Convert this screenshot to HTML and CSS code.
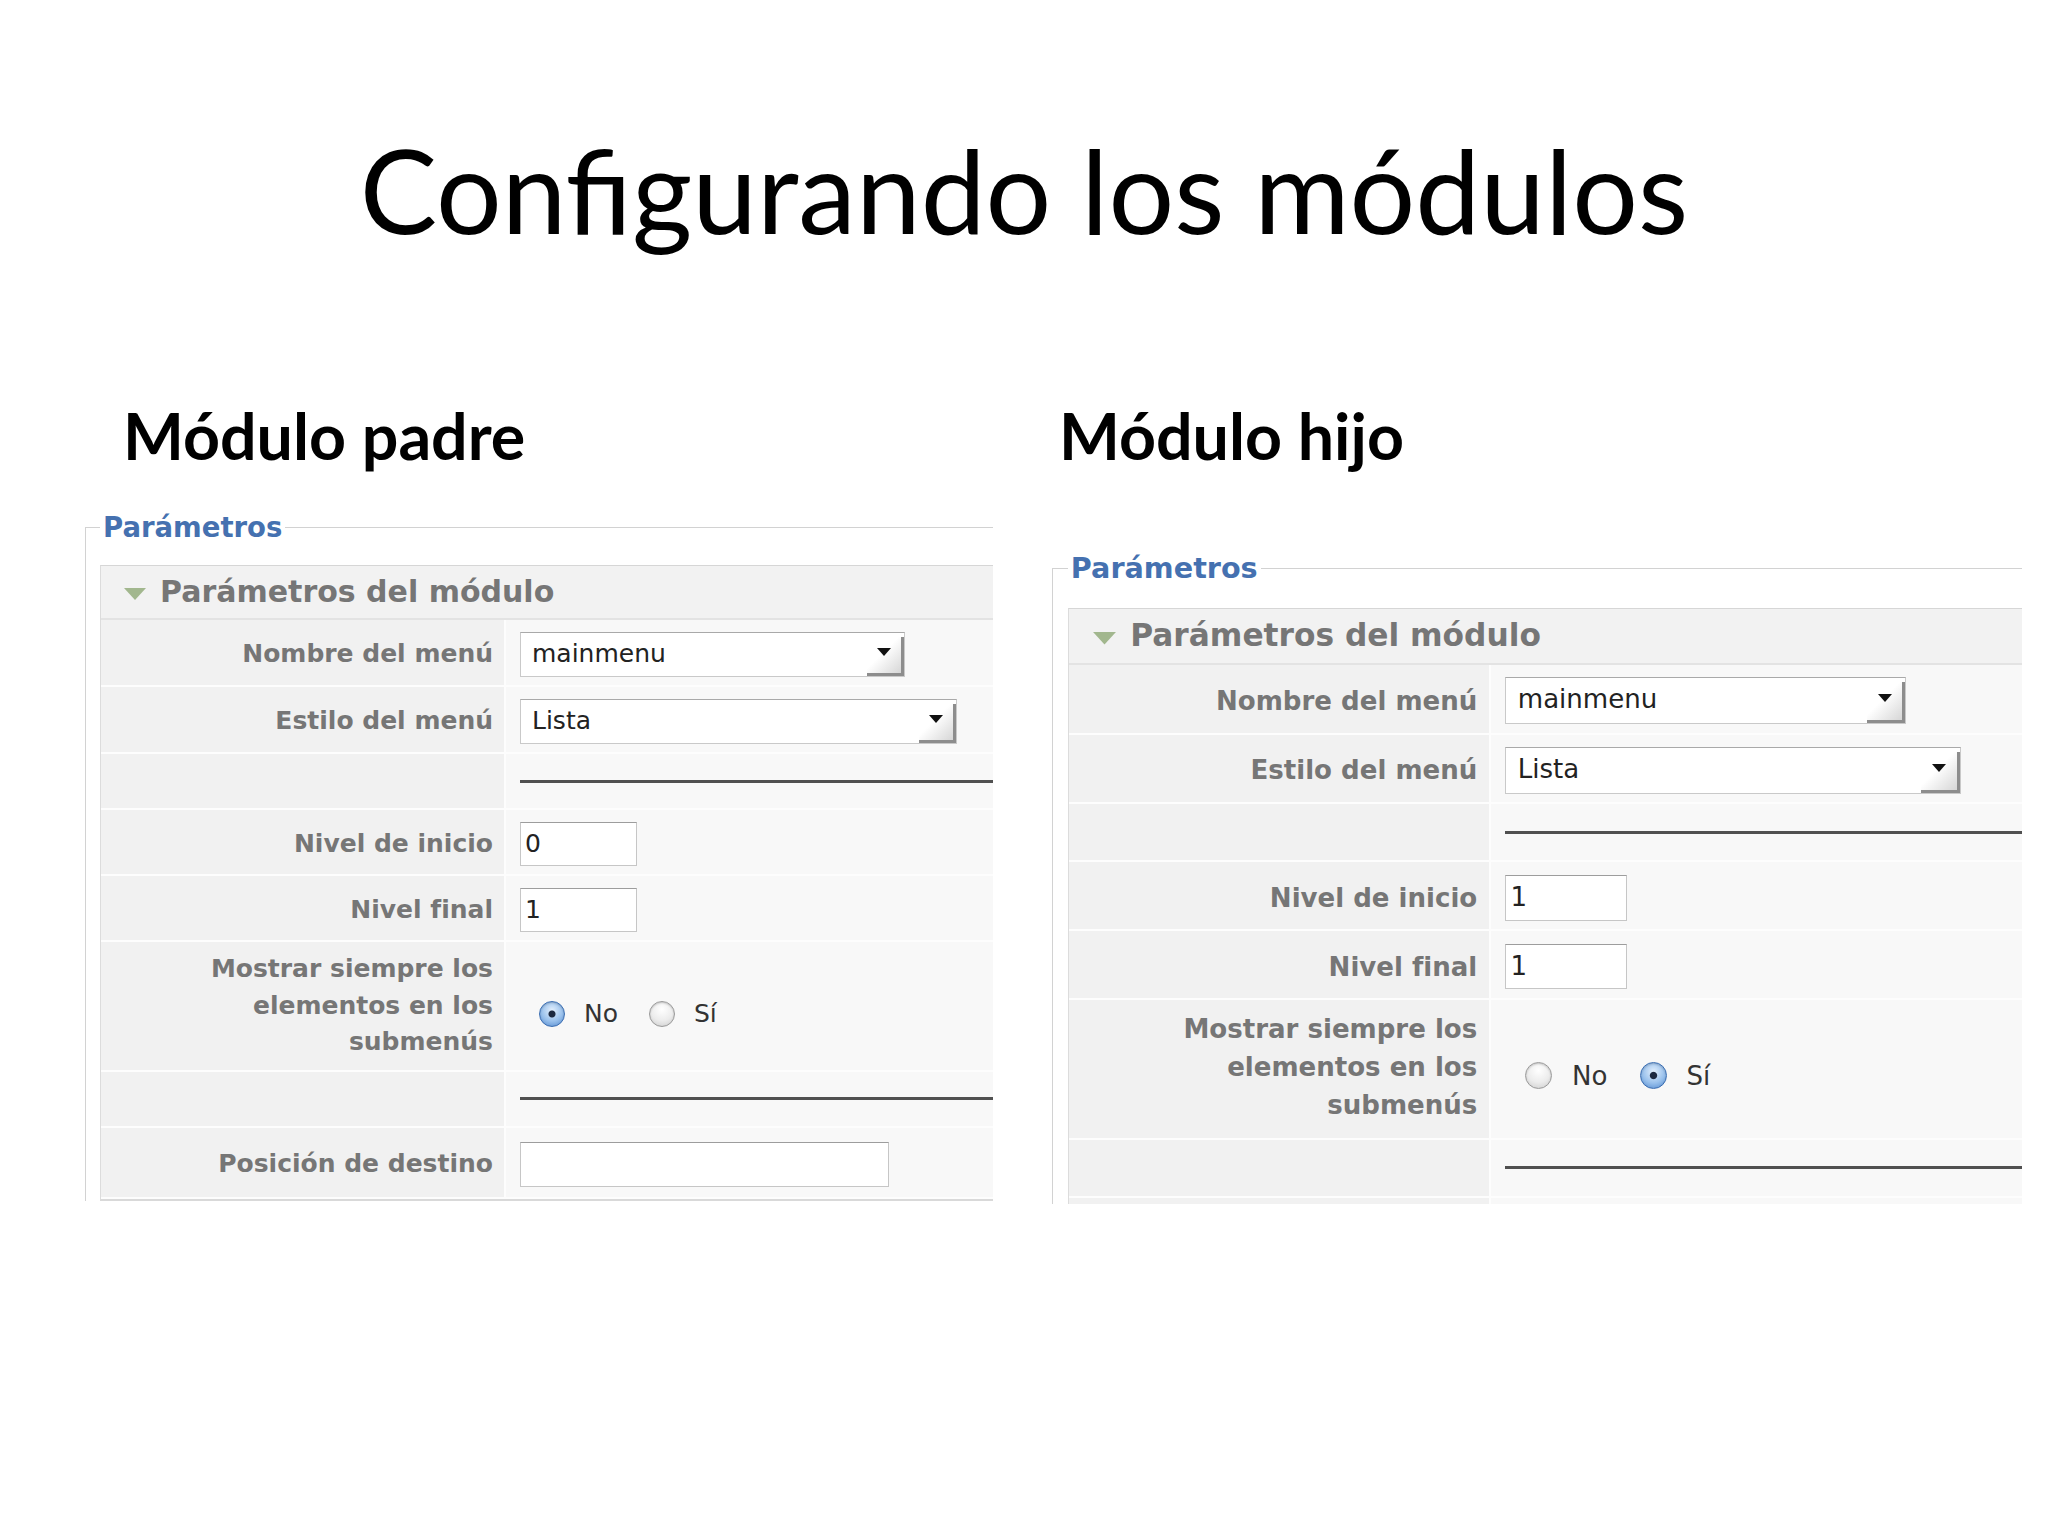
FILE: index.html
```html
<!DOCTYPE html>
<html lang="es">
<head>
    <meta charset="UTF-8">
    <meta name="viewport" content="width=device-width, initial-scale=1.0">
    <title>Configurando los módulos</title>
    <link rel="stylesheet" href="styles.css">
</head>
<body>
    <main class="slide">
        <h1 class="slide-title">Configurando los módulos</h1>

        <div class="columns">
            <!-- Parent menu module -->
            <section class="column column-parent">
                <h2>Módulo padre</h2>
                <div class="shot">
                    <fieldset class="params">
                        <legend>Parámetros</legend>
                        <div class="panel">
                            <div class="panel-head">
                                <svg class="toggle" width="24" height="14" viewBox="0 0 24 14"><polygon points="1,1 23,1 12,13" fill="#a2b78e"/></svg>
                                Parámetros del módulo
                            </div>
                            <div class="row">
                                <div class="key"><label>Nombre del menú</label></div>
                                <div class="value">
                                    <div class="select select-name"><span>mainmenu</span><i class="select-btn"></i></div>
                                </div>
                            </div>
                            <div class="row">
                                <div class="key"><label>Estilo del menú</label></div>
                                <div class="value">
                                    <div class="select select-style"><span>Lista</span><i class="select-btn"></i></div>
                                </div>
                            </div>
                            <div class="row row-spacer">
                                <div class="key"></div>
                                <div class="value"><hr class="spacer"></div>
                            </div>
                            <div class="row">
                                <div class="key"><label>Nivel de inicio</label></div>
                                <div class="value"><div class="field field-short">0</div></div>
                            </div>
                            <div class="row">
                                <div class="key"><label>Nivel final</label></div>
                                <div class="value"><div class="field field-short">1</div></div>
                            </div>
                            <div class="row row-tall">
                                <div class="key"><label>Mostrar siempre los elementos en los submenús</label></div>
                                <div class="value">
                                    <div class="radios">
                                        <span class="radio checked"></span><span class="radio-label">No</span>
                                        <span class="radio"></span><span class="radio-label">Sí</span>
                                    </div>
                                </div>
                            </div>
                            <div class="row row-spacer">
                                <div class="key"></div>
                                <div class="value"><hr class="spacer"></div>
                            </div>
                            <div class="row row-last">
                                <div class="key"><label>Posición de destino</label></div>
                                <div class="value"><div class="field field-long"></div></div>
                            </div>
                        </div>
                    </fieldset>
                </div>
            </section>

            <!-- Child menu module -->
            <section class="column column-child">
                <h2>Módulo hijo</h2>
                <div class="shot">
                    <fieldset class="params">
                        <legend>Parámetros</legend>
                        <div class="panel">
                            <div class="panel-head">
                                <svg class="toggle" width="24" height="14" viewBox="0 0 24 14"><polygon points="1,1 23,1 12,13" fill="#a2b78e"/></svg>
                                Parámetros del módulo
                            </div>
                            <div class="row">
                                <div class="key"><label>Nombre del menú</label></div>
                                <div class="value">
                                    <div class="select select-name"><span>mainmenu</span><i class="select-btn"></i></div>
                                </div>
                            </div>
                            <div class="row">
                                <div class="key"><label>Estilo del menú</label></div>
                                <div class="value">
                                    <div class="select select-style"><span>Lista</span><i class="select-btn"></i></div>
                                </div>
                            </div>
                            <div class="row row-spacer">
                                <div class="key"></div>
                                <div class="value"><hr class="spacer"></div>
                            </div>
                            <div class="row">
                                <div class="key"><label>Nivel de inicio</label></div>
                                <div class="value"><div class="field field-short">1</div></div>
                            </div>
                            <div class="row">
                                <div class="key"><label>Nivel final</label></div>
                                <div class="value"><div class="field field-short">1</div></div>
                            </div>
                            <div class="row row-tall">
                                <div class="key"><label>Mostrar siempre los elementos en los submenús</label></div>
                                <div class="value">
                                    <div class="radios">
                                        <span class="radio"></span><span class="radio-label">No</span>
                                        <span class="radio checked"></span><span class="radio-label">Sí</span>
                                    </div>
                                </div>
                            </div>
                            <div class="row row-spacer">
                                <div class="key"></div>
                                <div class="value"><hr class="spacer"></div>
                            </div>
                            <div class="row row-spacer">
                                <div class="key"></div>
                                <div class="value"></div>
                            </div>
                        </div>
                    </fieldset>
                </div>
            </section>
        </div>
    </main>
</body>
</html>
```

FILE: styles.css
```css
body {
    margin: 0;
    background: #fff;
}
.slide {
    width: 2048px;
    height: 1536px;
    overflow: hidden;
    font-family: Lato, "Open Sans", sans-serif;
    color: #000;
}
.slide-title {
    margin: 0;
    padding-top: 132px;
    font-size: 116px;
    font-weight: 400;
    line-height: 1;
    text-align: center;
}
.columns {
    display: grid;
    grid-template-columns: 967px 1fr;
    padding-left: 81px;
    margin-top: 155px;
}
.column h2 {
    margin: 0;
    font-size: 64.5px;
    font-weight: 700;
    line-height: 1;
}
.column-parent h2 {
    padding-left: 42px;
}
.column-child h2 {
    padding-left: 11px;
}

/* admin screenshot: parameters fieldset */
.shot {
    box-sizing: border-box;
    overflow: hidden;
    padding-top: 8px;
    background: #fff;
    font-family: "DejaVu Sans", Verdana, sans-serif;
}
.column-parent .shot {
    width: 912px;
    height: 705px;
    margin-top: 35.5px;
}
.column-child .shot {
    zoom: 1.042;
    width: 935px;
    height: 634px;
    margin-top: 72.5px;
}
.params {
    width: 1000px;
    min-width: 0;
    margin: 0 0 0 4px;
    padding: 0 0 0 14px;
    border: 1px solid #d2d2d2;
    border-right: 0;
    border-bottom: 0;
}
.params legend {
    padding: 0 3px;
    font-size: 27.5px;
    font-weight: 700;
    line-height: 33px;
    color: #4571b0;
}
.panel {
    margin-top: 21px;
    border-top: 1px solid #d6d6d6;
    border-left: 1px solid #dcdcdc;
    border-bottom: 2px solid #d9d9d9;
    background: #f8f8f8;
}
.panel-head {
    display: flex;
    align-items: center;
    gap: 13px;
    padding: 8px 0 8px 22px;
    border-bottom: 2px solid #e3e3e3;
    background: #f2f2f2;
    font-size: 30px;
    font-weight: 700;
    line-height: 36px;
    color: #767676;
}
.toggle {
    flex: none;
    margin-top: 4px;
}

.row {
    display: grid;
    grid-template-columns: 405px 1fr;
}
.key,
.value {
    display: flex;
    align-items: center;
    padding: 12px 0 8px;
    border-bottom: 2px solid #fdfdfd;
}
.key {
    justify-content: flex-end;
    padding-left: 30px;
    padding-right: 11px;
    border-right: 2px solid #fdfdfd;
    background: #f1f1f1;
    font-size: 25px;
    font-weight: 700;
    line-height: 36.5px;
    color: #767676;
    text-align: right;
}
.value {
    padding-left: 14px;
    font-size: 25px;
    color: #222;
}
.row-tall .key,
.row-tall .value {
    padding-top: 9px;
    padding-bottom: 9px;
}
.column-child .row-tall .key,
.column-child .row-tall .value {
    padding-top: 10px;
    padding-bottom: 13px;
}
.row-spacer .key,
.row-spacer .value {
    height: 54px;
    padding-top: 0;
    padding-bottom: 0;
}
.row-last .key,
.row-last .value {
    padding-top: 14px;
    padding-bottom: 10px;
}
.spacer {
    width: 100%;
    margin: 0;
    border: 0;
    border-top: 3px solid #505050;
}

/* form controls */
.select {
    display: flex;
    box-sizing: border-box;
    height: 45px;
    border: 1px solid #c9c9c9;
    border-top-color: #a9a9a9;
    background: #fff;
}
.select span {
    flex: 1;
    padding-left: 11px;
    line-height: 42px;
}
.select-name {
    width: 385px;
}
.select-style {
    width: 437px;
}
.select-btn {
    display: flex;
    justify-content: center;
    align-items: center;
    width: 34px;
    margin-top: 4px;
    border-right: 3px solid #8d8d8d;
    border-bottom: 3px solid #8d8d8d;
    background: linear-gradient(135deg, #fff 45%, #d6d6d6);
}
.select-btn::before {
    content: "";
    margin-bottom: 6px;
    border-left: 7px solid transparent;
    border-right: 7px solid transparent;
    border-top: 8px solid #111;
}
.field {
    box-sizing: border-box;
    height: 44px;
    padding-left: 4px;
    border: 1px solid #c6c6c6;
    border-top-color: #9d9d9d;
    background: #fff;
    line-height: 42px;
}
.field-short {
    width: 117px;
}
.field-long {
    width: 369px;
    height: 45px;
}
.radios {
    display: flex;
    align-items: center;
    margin-top: 16px;
    color: #333;
}
.radio {
    box-sizing: border-box;
    width: 26px;
    height: 26px;
    margin-left: 19px;
    border: 1px solid #9a9a9a;
    border-radius: 50%;
    background: radial-gradient(circle at 50% 30%, #fff, #ececec 55%, #cbcbcb);
    box-shadow: inset 0 1px 2px rgba(0, 0, 0, 0.2);
}
.radio + .radio-label + .radio {
    margin-left: 31px;
}
.radio.checked {
    border-color: #3a6db2;
    background:
        radial-gradient(circle, #1c2940 0 3px, transparent 4px),
        radial-gradient(circle at 50% 35%, #e3effc, #98c0ec 55%, #4f86cc);
}
.radio-label {
    margin-left: 19px;
}
```
